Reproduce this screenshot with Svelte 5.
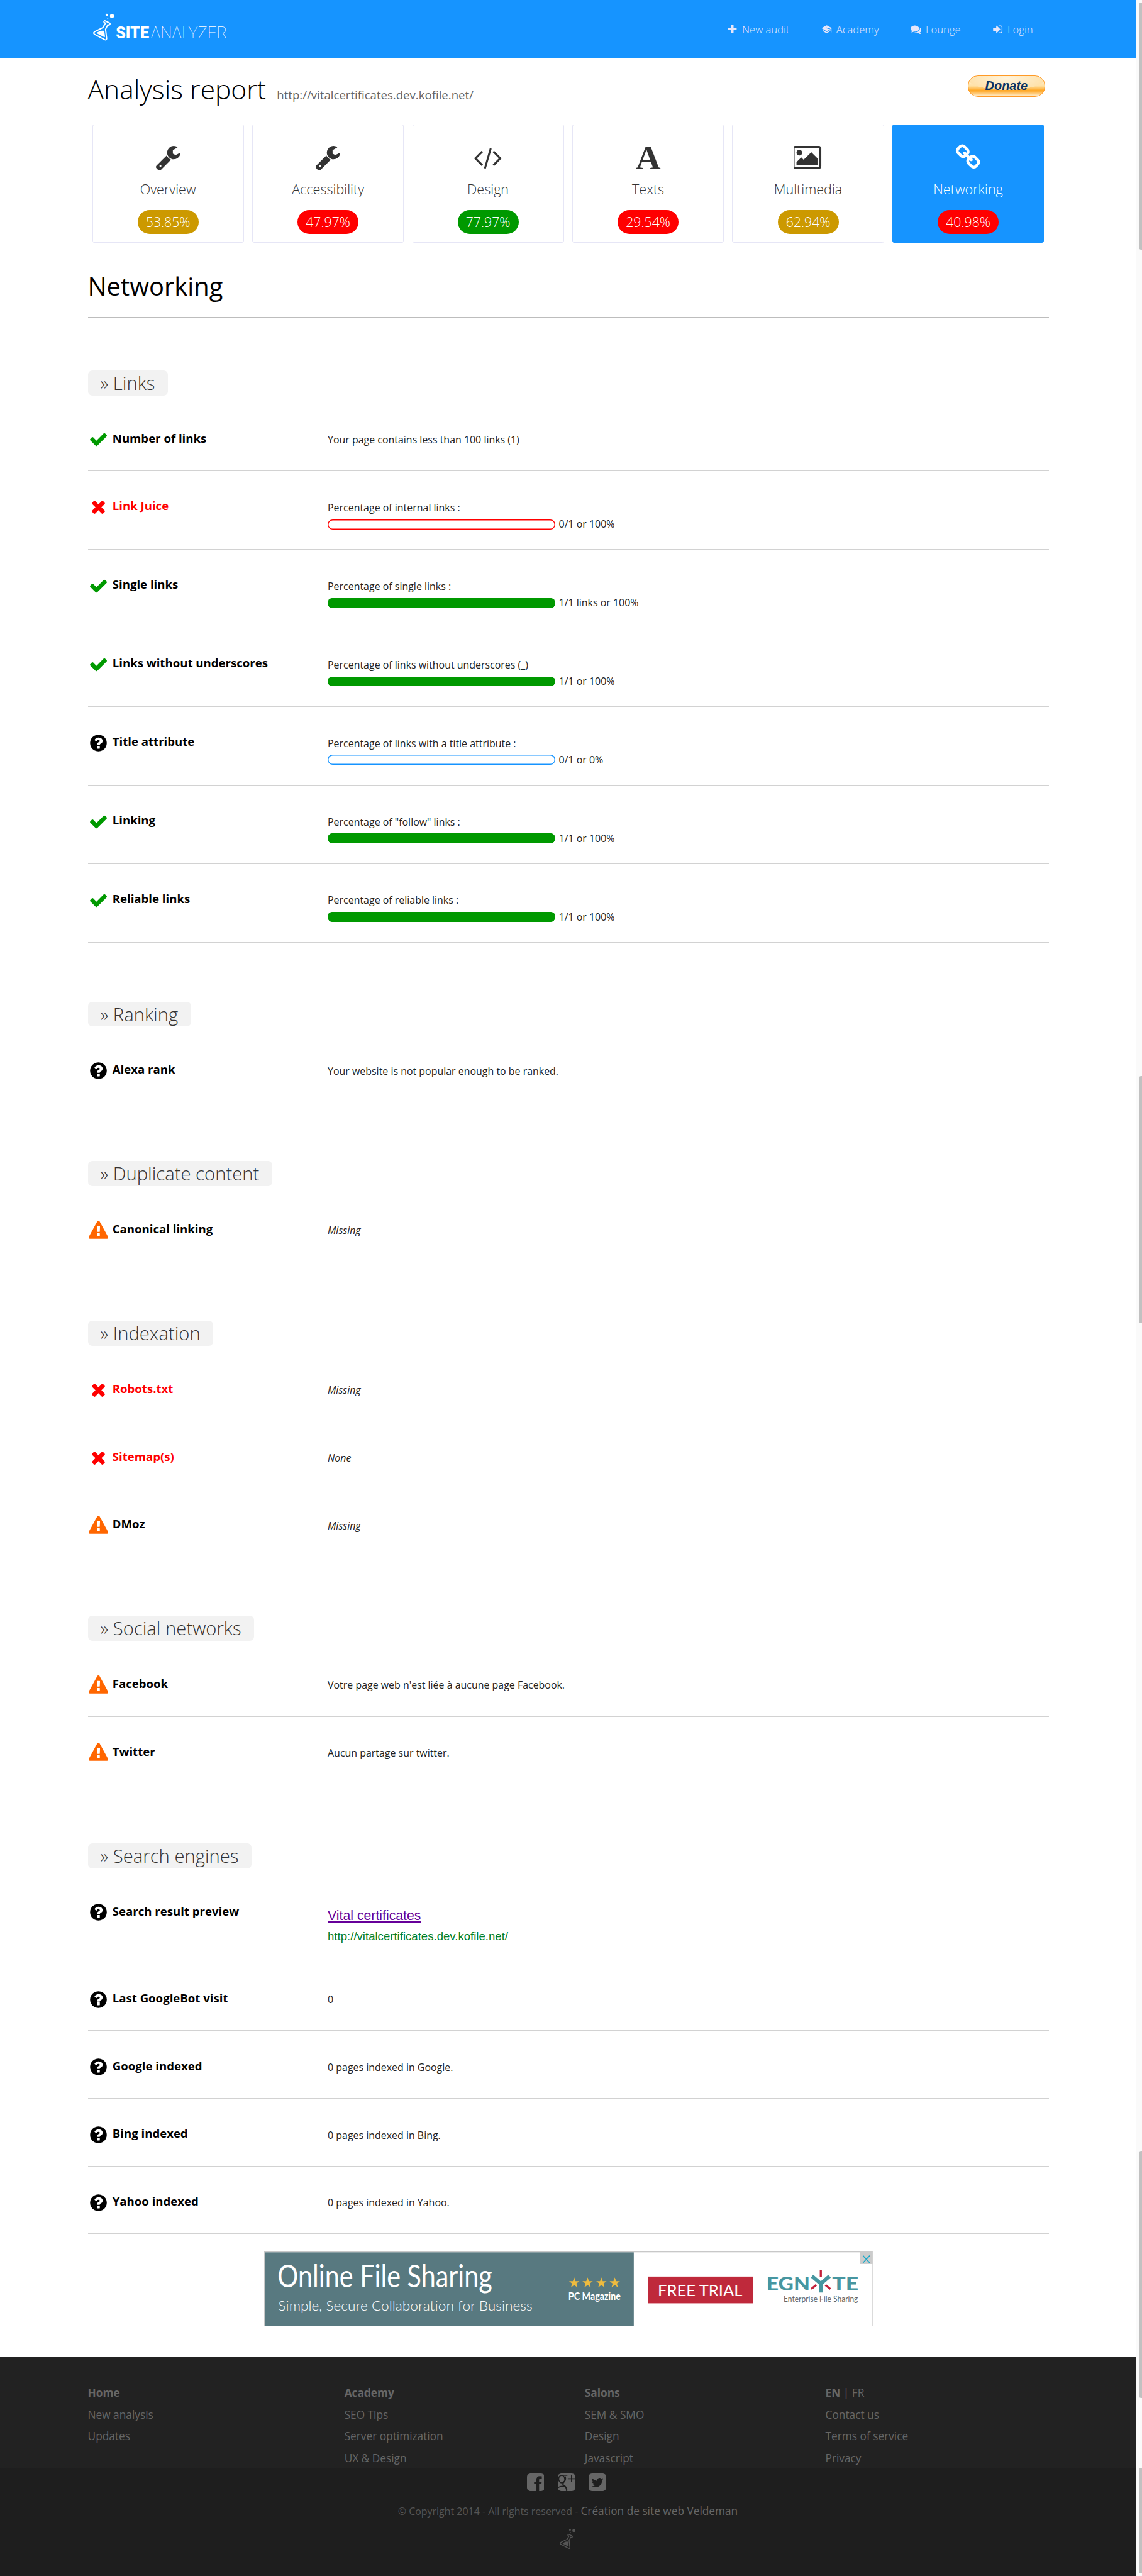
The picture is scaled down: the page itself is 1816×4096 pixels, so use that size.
<script>
  // FontAwesome-style glyphs: [viewBox, path]
  const icons = {
    plus: ['0 0 1792 1792', 'M1600 736v192q0 40-28 68t-68 28h-416v416q0 40-28 68t-68 28h-192q-40 0-68-28t-28-68v-416h-416q-40 0-68-28t-28-68v-192q0-40 28-68t68-28h416v-416q0-40 28-68t68-28h192q40 0 68 28t28 68v416h416q40 0 68 28t28 68z'],
    academy: ['0 0 26 24', 'M0.5 9.2 11.6 2.6Q12.8 1.9 14 2.6L25 8.6 24.4 10V19.5H23V11L14.5 15.8Q13.2 16.4 11.8 15.8zM10.3 8.7 20.3 11.8 21.6 10.3 12.5 7.6zM4 13.7 11.8 18Q13.2 18.6 14.5 18L21.8 13.8V16L14.2 21Q13 21.6 11.8 21L5.5 17.3z'],
    comments: ['0 0 1792 1792', 'M1408 768q0 139-94 257t-256.5 186.5-353.5 68.5q-86 0-176-16-124 88-278 128-36 9-86 16h-3q-11 0-20.5-8t-11.5-21q-1-3-1-6.5t.5-6.5 2-6l2.5-5 3.5-5.5 4-5 4.5-5 4-4.5q5-6 23-25t26-29.5 22.5-29 25-38.5 20.5-44q-124-72-195-177t-71-224q0-139 94-257t256.5-186.5 353.5-68.5 353.5 68.5 256.5 186.5 94 257zm384 256q0 120-71 224.5t-195 176.5q10 24 20.5 44t25 38.5 22.5 29 26 29.5 23 25q1 1 4 4.5t4.5 5 4 5 3.5 5.5l2.5 5t2 6 .5 6.5-1 6.5q-3 14-13 22t-22 7q-50-7-86-16-154-40-278-128-90 16-176 16-271 0-472-132 58 4 88 4 161 0 309-45t264-129q125-92 192-212t67-254q0-77-23-152 129 71 204 178t75 230z'],
    login: ['0 0 1792 1792', 'M1312 896q0 26-19 45l-544 544q-19 19-45 19t-45-19-19-45v-288h-448q-26 0-45-19t-19-45v-384q0-26 19-45t45-19h448v-288q0-26 19-45t45-19 45 19l544 544q19 19 19 45zm352-352v704q0 119-84.5 203.5t-203.5 84.5h-320q-13 0-22.5-9.5t-9.5-22.5q0-4-1-20t-.5-26.5 3-23.5 10-19.5 20.5-6.5h320q66 0 113-47t47-113v-704q0-66-47-113t-113-47h-312l-11.5-1-11.5-3-8-5.5-7-9-2-13.5q0-4-1-20t-.5-26.5 3-23.5 10-19.5 20.5-6.5h320q119 0 203.5 84.5t84.5 203.5z'],
    wrench: ['0 0 1792 1792', 'M448 1472q0-26-19-45t-45-19-45 19-19 45 19 45 45 19 45-19 19-45zm644-420l-682 682q-37 37-90 37-52 0-91-37l-106-108q-38-36-38-90 0-53 38-91l681-681q39 98 114.5 173.5t173.5 114.5zm634-435q0 39-23 106-47 134-164.5 217.5t-258.5 83.5q-185 0-316.5-131.5t-131.5-316.5 131.5-316.5 316.5-131.5q58 0 121.5 16.5t107.5 46.5q16 11 16 28t-16 28l-293 169v224l193 107q5-3 79-48.5t135.5-81 70.5-35.5q15 0 23.5 10t8.5 25z'],
    code: ['0 0 1920 1792', 'M617 1399l-50 50q-10 10-23 10t-23-10l-466-466q-10-10-10-23t10-23l466-466q10-10 23-10t23 10l50 50q10 10 10 23t-10 23l-393 393 393 393q10 10 10 23t-10 23zm591-1067l-373 1291q-4 13-15.5 19.5t-23.5 2.5l-62-17q-13-4-19.5-15.5t-2.5-24.5l373-1291q4-13 15.5-19.5t23.5-2.5l62 17q13 4 19.5 15.5t2.5 24.5zm657 651l-466 466q-10 10-23 10t-23-10l-50-50q-10-10-10-23t10-23l393-393-393-393q-10-10-10-23t10-23l50-50q10-10 23-10t23 10l466 466q10 10 10 23t-10 23z'],
    image: ['0 0 1920 1792', 'M576 576q0 80-56 136t-136 56-136-56-56-136 56-136 136-56 136 56 56 136zm1024 384v448h-1408v-192l320-320 160 160 512-512zm96-704h-1600q-13 0-22.5 9.5t-9.5 22.5v1216q0 13 9.5 22.5t22.5 9.5h1600q13 0 22.5-9.5t9.5-22.5v-1216q0-13-9.5-22.5t-22.5-9.5zm160 32v1216q0 66-47 113t-113 47h-1600q-66 0-113-47t-47-113v-1216q0-66 47-113t113-47h1600q66 0 113 47t47 113z'],
    link: ['0 0 1792 1792', 'M1520 1216q0-40-28-68l-208-208q-28-28-68-28-42 0-72 32 3 3 19 18.5t21.5 21.5 15 19 13 25.5 3.5 27.5q0 40-28 68t-68 28q-15 0-27.5-3.5t-25.5-13-19-15-21.5-21.5-18.5-19q-33 31-33 73 0 40 28 68l206 207q27 27 68 27 40 0 68-26l147-146q28-28 28-67zm-703-705q0-40-28-68l-206-207q-28-28-68-28-39 0-68 27l-147 146q-28 28-28 67 0 40 28 68l208 208q27 27 68 27 42 0 72-31-3-3-19-18.5t-21.5-21.5-15-19-13-25.5-3.5-27.5q0-40 28-68t68-28q15 0 27.5 3.5t25.5 13 19 15 21.5 21.5 18.5 19q33-31 33-73zm895 705q0 120-85 203l-147 146q-83 83-203 83-121 0-204-85l-206-207q-83-83-83-203 0-123 88-209l-88-88q-86 88-208 88-120 0-204-84l-208-208q-84-84-84-204t85-203l147-146q83-83 203-83 121 0 204 85l206 207q83 83 83 203 0 123-88 209l88 88q86-88 208-88 120 0 204 84l208 208q84 84 84 204z'],
    ok: ['0 0 1792 1792', 'M1671 566q0 40-28 68l-724 724-136 136q-28 28-68 28t-68-28l-136-136-362-362q-28-28-28-68t28-68l136-136q28-28 68-28t68 28l294 295 656-657q28-28 68-28t68 28l136 136q28 28 28 68z'],
    bad: ['0 0 1792 1792', 'M1490 1322q0 40-28 68l-136 136q-28 28-68 28t-68-28l-294-294-294 294q-28 28-68 28t-68-28l-136-136q-28-28-28-68t28-68l294-294-294-294q-28-28-28-68t28-68l136-136q28-28 68-28t68 28l294 294 294-294q28-28 68-28t68 28l136 136q28 28 28 68t-28 68l-294 294 294 294q28 28 28 68z'],
    info: ['0 0 1792 1792', 'M1024 1376v-192q0-14-9-23t-23-9h-192q-14 0-23 9t-9 23v192q0 14 9 23t23 9h192q14 0 23-9t9-23zm256-672q0-88-55.5-163t-138.5-116-170-41q-243 0-371 213-15 24 8 42l132 100q7 6 19 6 16 0 25-12 53-68 86-92 34-24 86-24 48 0 85.5 26t37.5 59q0 38-20 61t-68 45q-63 28-115.5 86.5t-52.5 125.5v36q0 14 9 23t23 9h192q14 0 23-9t9-23q0-19 21.5-49.5t54.5-49.5q32-18 49-28.5t46-35 44.5-48 28-60.5 12.5-81zm384 192q0 209-103 385.5t-279.5 279.5-385.5 103-385.5-103-279.5-279.5-103-385.5 103-385.5 279.5-279.5 385.5-103 385.5 103 279.5 279.5 103 385.5z'],
    warn: ['0 0 1792 1792', 'M1024 1375v-190q0-14-9.5-23.5t-22.5-9.5h-192q-13 0-22.5 9.5t-9.5 23.5v190q0 14 9.5 23.5t22.5 9.5h192q13 0 22.5-9.5t9.5-23.5zm-2-374l18-459q0-12-10-19-13-11-24-11h-220q-11 0-24 11-10 7-10 21l17 457q0 10 10 16.5t24 6.5h185q14 0 23.5-6.5t10.5-16.5zm-14-934l768 1408q35 63-2 126-17 29-46.5 46t-63.5 17h-1536q-34 0-63.5-17t-46.5-46q-37-63-2-126l768-1408q17-31 47-49t65-18 65 18 47 49z'],
    facebook: ['128 128 1536 1536', 'M1376 128q119 0 203.5 84.5t84.5 203.5v960q0 119-84.5 203.5t-203.5 84.5h-188v-595h199l30-232h-229v-148q0-56 23.5-84t91.5-28l122-1v-207q-63-9-178-9-136 0-217.5 80t-81.5 226v171h-200v232h200v595h-532q-119 0-203.5-84.5t-84.5-203.5v-960q0-119 84.5-203.5t203.5-84.5h960z'],
    twitter: ['128 128 1536 1536', 'M1408 610q-56 25-121 34 68-40 93-117-65 38-134 51-61-66-153-66-87 0-148.5 61.5t-61.5 148.5q0 29 5 48-129-7-242-65t-192-155q-29 50-29 106 0 114 91 175-47-1-100-26v2q0 75 50 133.5t123 72.5q-29 8-51 8-13 0-39-4 21 63 74.5 104t121.5 42q-116 90-261 90-26 0-50-3 148 94 322 94 112 0 210-35.5t168-95 120.5-137 75-162 24.5-168.5q0-18-1-27 63-45 105-109zm256-194v960q0 119-84.5 203.5t-203.5 84.5h-960q-119 0-203.5-84.5t-84.5-203.5v-960q0-119 84.5-203.5t203.5-84.5h960q119 0 203.5 84.5t84.5 203.5z']
  };

  const nav = [
    ['plus', 'New audit'],
    ['academy', 'Academy'],
    ['comments', 'Lounge'],
    ['login', 'Login']
  ];

  const tiles = [
    { icon: 'wrench', label: 'Overview', score: '53.85%', tone: 'amber' },
    { icon: 'wrench', label: 'Accessibility', score: '47.97%', tone: 'red' },
    { icon: 'code', label: 'Design', score: '77.97%', tone: 'green' },
    { icon: 'letter', label: 'Texts', score: '29.54%', tone: 'red' },
    { icon: 'image', label: 'Multimedia', score: '62.94%', tone: 'amber' },
    { icon: 'link', label: 'Networking', score: '40.98%', tone: 'red', active: true }
  ];

  const sections = [
    {
      title: 'Links',
      rows: [
        { s: 'ok', name: 'Number of links', text: 'Your page contains less than 100 links (1)' },
        { s: 'bad', name: 'Link Juice', text: 'Percentage of internal links :', bar: '0/1 or 100%', fill: 0 },
        { s: 'ok', name: 'Single links', text: 'Percentage of single links :', bar: '1/1 links or 100%', fill: 100 },
        { s: 'ok', name: 'Links without underscores', text: 'Percentage of links without underscores (_)', bar: '1/1 or 100%', fill: 100 },
        { s: 'info', name: 'Title attribute', text: 'Percentage of links with a title attribute :', bar: '0/1 or 0%', fill: 0 },
        { s: 'ok', name: 'Linking', text: 'Percentage of "follow" links :', bar: '1/1 or 100%', fill: 100 },
        { s: 'ok', name: 'Reliable links', text: 'Percentage of reliable links :', bar: '1/1 or 100%', fill: 100 }
      ]
    },
    { title: 'Ranking', rows: [{ s: 'info', name: 'Alexa rank', text: 'Your website is not popular enough to be ranked.' }] },
    { title: 'Duplicate content', rows: [{ s: 'warn', name: 'Canonical linking', text: 'Missing', em: true }] },
    {
      title: 'Indexation',
      rows: [
        { s: 'bad', name: 'Robots.txt', text: 'Missing', em: true },
        { s: 'bad', name: 'Sitemap(s)', text: 'None', em: true },
        { s: 'warn', name: 'DMoz', text: 'Missing', em: true }
      ]
    },
    {
      title: 'Social networks',
      rows: [
        { s: 'warn', name: 'Facebook', text: "Votre page web n'est liée à aucune page Facebook." },
        { s: 'warn', name: 'Twitter', text: 'Aucun partage sur twitter.' }
      ]
    },
    {
      title: 'Search engines',
      rows: [
        { s: 'info', name: 'Search result preview', preview: ['Vital certificates', 'http://vitalcertificates.dev.kofile.net/'] },
        { s: 'info', name: 'Last GoogleBot visit', text: '0' },
        { s: 'info', name: 'Google indexed', text: '0 pages indexed in Google.' },
        { s: 'info', name: 'Bing indexed', text: '0 pages indexed in Bing.' },
        { s: 'info', name: 'Yahoo indexed', text: '0 pages indexed in Yahoo.' }
      ]
    }
  ];

  const footer = [
    ['Home', 'New analysis', 'Updates'],
    ['Academy', 'SEO Tips', 'Server optimization', 'UX & Design'],
    ['Salons', 'SEM & SMO', 'Design', 'Javascript'],
    ['EN', 'Contact us', 'Terms of service', 'Privacy']
  ];

  const stars = [742, 774, 807, 839];
</script>

{#snippet icon(name)}
  <svg class="icon" viewBox={icons[name][0]}><path fill="currentColor" fill-rule="evenodd" d={icons[name][1]} /></svg>
{/snippet}

{#snippet flask()}
  <g fill="none" stroke="currentColor" stroke-width="9" stroke-linejoin="round" stroke-linecap="round">
    <path d="M102 104Q98 98 102 94Q106 88 113 93L137 105Q146 109 144 115Q141 123 133 120" />
    <path d="M105 104L111 108L93 139L32 170Q22 179 32 187L106 226Q119 232 120 217L112 152L128 119L133 121" />
  </g>
  <path fill="currentColor" d="M49 178Q50 174 72 165Q78 161 101 162Q103 162 103 165L108 203Q108 210 100 206L52 182Q48 180 49 178z" />
  <circle fill="currentColor" cx="121" cy="49" r="9" />
  <circle fill="currentColor" cx="158" cy="56" r="14.5" />
  <circle fill="currentColor" cx="128" cy="74" r="3.6" />
{/snippet}

<div class="frame">
  <div class="page">
    <header>
      <svg class="logo" viewBox="0 0 1020 300">
        {@render flask()}
        <text class="site" x="186" y="218" textLength="238" lengthAdjust="spacingAndGlyphs">SITE</text>
        <text class="analyzer" x="437" y="218" textLength="549" lengthAdjust="spacingAndGlyphs">ANALYZER</text>
      </svg>
      <nav>
        {#each nav as [name, label]}
          <a>{@render icon(name)}<span>{label}</span></a>
        {/each}
      </nav>
    </header>

    <main>
      <div class="heading">
        <h1>Analysis report</h1>
        <span class="url">http://vitalcertificates.dev.kofile.net/</span>
        <button class="donate">Donate</button>
      </div>

      <div class="tiles">
        {#each tiles as t}
          <div class="tile" class:active={t.active}>
            <div class="glyph">
              {#if t.icon === 'letter'}<span class="letter">A</span>{:else}{@render icon(t.icon)}{/if}
            </div>
            <div class="tile-label">{t.label}</div>
            <div class="pill {t.tone}">{t.score}</div>
          </div>
        {/each}
      </div>

      <h2>Networking</h2>

      {#each sections as section}
        <section>
          <h3>» {section.title}</h3>
          {#each section.rows as r}
            <div class="row {r.s}" class:with-bar={r.bar} class:with-preview={r.preview}>
              <div class="mark">{@render icon(r.s)}</div>
              <div class="name">{r.name}</div>
              <div class="detail">
                {#if r.preview}
                  <a class="result">{r.preview[0]}</a>
                  <div class="result-url">{r.preview[1]}</div>
                {:else}
                  <div class="text" class:em={r.em}>{r.text}</div>
                  {#if r.bar}
                    <div class="meter">
                      <div class="track"><div class="fill" style="width: {r.fill}%"></div></div>
                      <span>{r.bar}</span>
                    </div>
                  {/if}
                {/if}
              </div>
            </div>
          {/each}
        </section>
      {/each}

      <svg class="banner" viewBox="0 0 1456 180">
        <rect x="1" y="1" width="1454" height="178" fill="#fff" stroke="#c8c8c8" stroke-width="2" />
        <rect x="1.5" y="2" width="883" height="176" fill="#587980" />
        <g fill="#fff">
          <text class="lato" x="32" y="86" font-size="76" textLength="514" lengthAdjust="spacingAndGlyphs">Online File Sharing</text>
          <text class="lato" x="34" y="141" font-size="33.5" font-weight="300" textLength="608" lengthAdjust="spacingAndGlyphs">Simple, Secure Collaboration for Business</text>
          <text class="lato" x="728" y="116" font-size="27" font-weight="700" textLength="125" lengthAdjust="spacingAndGlyphs">PC Magazine</text>
        </g>
        {#each stars as x}
          <path transform="translate({x} 75)" fill="#eebb3f" d="M0-13 3.2-4H12.4L5 1.6 7.8 11 0 5.3-7.8 11-5 1.6-12.4-4H-3.2z" />
        {/each}
        <rect x="918" y="60" width="252" height="64" fill="#bf293b" />
        <text class="lato" x="942" y="107" font-size="38" fill="#fff" textLength="202" lengthAdjust="spacingAndGlyphs">FREE TRIAL</text>
        <g fill="#4796a0">
          <text class="lato" x="1202" y="94" font-size="46" font-weight="900" textLength="104" lengthAdjust="spacingAndGlyphs">EGN</text>
          <text class="lato" x="1359" y="94" font-size="46" font-weight="900" textLength="63" lengthAdjust="spacingAndGlyphs">TE</text>
        </g>
        <path d="M1311 59L1332 77L1353 59M1332 75V98" fill="none" stroke="#4796a0" stroke-width="9" />
        <path d="M1332 45V61M1309 90L1321 80M1355 90L1343 80" fill="none" stroke="#c4213a" stroke-width="5" />
        <text class="lato" x="1243" y="121" font-size="21" fill="#666" textLength="178" lengthAdjust="spacingAndGlyphs">Enterprise File Sharing</text>
        <rect x="1426" y="0" width="30" height="30" fill="#ccc" />
        <path d="M1433 10L1449 27M1449 10L1433 27" stroke="#18a8c8" stroke-width="2.4" />
      </svg>
    </main>

    <footer>
      <div class="links">
        {#each footer as col, i}
          <ul>
            {#each col as item, j}
              <li class:strong={j === 0}>{item}{#if i === 3 && j === 0}<span class="lang">{' | FR'}</span>{/if}</li>
            {/each}
          </ul>
        {/each}
      </div>
      <div class="legal">
        <div class="social">
          {@render icon('facebook')}
          <svg class="icon" viewBox="0 0 42 42">
            <rect width="42" height="42" rx="8" fill="currentColor" />
            <g fill="none" stroke="#1e1e1e">
              <ellipse cx="9.500" cy="13.500" rx="7.500" ry="9" stroke-width="2.600" transform="rotate(-8 9.5 13.5)" />
              <path d="M10 4.500H23" stroke-width="2" />
              <path d="M17 7Q20.500 14 15 20Q10 25 14 28.500Q22.500 33 21 42" stroke-width="3.200" />
              <path d="M0 34.500Q6 29.500 15 31" stroke-width="2.400" />
              <path d="M33 4V21M24 12.500H42" stroke-width="2.800" />
            </g>
          </svg>
          {@render icon('twitter')}
        </div>
        <p>© Copyright 2014 - All rights reserved - <a>Création de site web Veldeman</a></p>
        <svg class="mini" viewBox="22 38 152 198">{@render flask()}</svg>
      </div>
    </footer>
  </div>

  <div class="scroll">
    <i class="t1"></i><i class="t2"></i><i class="t3"></i><i class="t4"></i>
  </div>
</div>

<style>
  :global(html) { font-size: 66.46px; }
  :global(body) { margin: 0; background: #fff; }
  .frame {
    display: grid;
    grid-template-columns: 1fr 0.15rem;
    width: 1816px;
    height: 4096px;
    overflow: hidden;
    font-family: 'Open Sans', 'Noto Sans', sans-serif;
    font-size: 0.24rem;
    color: #222;
  }
  .page { display: flex; flex-direction: column; min-width: 0; }
  .icon { display: block; height: 100%; }

  header {
    flex: none;
    display: flex;
    justify-content: space-between;
    box-sizing: border-box;
    height: 1.4rem;
    padding: 0 2.46rem 0 2.15rem;
    background: #1694ff;
    color: #fff;
  }
  .logo { width: 3.4rem; height: 1rem; margin-top: 0.2rem; fill: #fff; }
  .site { font: 900 117px Roboto, sans-serif; }
  .analyzer { font: 100 117px Roboto, sans-serif; }
  nav { display: flex; gap: 0.76rem; height: 1.39rem; align-items: center; color: #e6e6fa; }
  nav a { display: flex; align-items: center; gap: 0.1rem; font-weight: 300; font-size: 0.25rem; }
  nav .icon { width: 0.26rem; height: 0.26rem; }

  main { flex: none; width: 23rem; padding-left: 2.1rem; }
  .heading { display: flex; align-items: baseline; height: 1.42rem; line-height: 1.46rem; }
  h1 { margin: 0; font-weight: 300; font-size: 0.64rem; color: #000; }
  .url { margin-left: 0.26rem; font-size: 0.28rem; color: #666; }
  .donate {
    align-self: flex-start;
    width: 1.84rem;
    height: 0.52rem;
    margin: 0.4rem 0.1rem 0 auto;
    padding: 0;
    border: 1.5px solid #ff9a26;
    border-radius: 0.24rem;
    background:
      radial-gradient(ellipse 52% 60% at 50% 10%, #fff3da 0, #fee2ac 98%, transparent 100%),
      linear-gradient(#fff 0, #ffdf9e 50%, #ffa51f 72%, #ffc46a 84%, #fff2d8 100%);
    font: italic 700 0.3rem/0.48rem 'Liberation Sans', sans-serif;
    color: #0b3263;
  }

  .tiles { display: grid; grid-template-columns: repeat(6, 1fr); gap: 0.2rem; margin: 0.165rem 0.12rem 0 0.105rem; }
  .tile {
    display: flex;
    flex-direction: column;
    align-items: center;
    box-sizing: border-box;
    height: 2.83rem;
    padding-top: 0.44rem;
    border: 1.5px solid #e6e6f6;
    border-radius: 0.04rem;
    color: #333;
  }
  .active { background: #1694ff; border-color: #1694ff; color: #fff; }
  .glyph { height: 0.64rem; }
  .letter { display: block; font: 700 0.83rem/0.66rem 'Liberation Serif', serif; }
  .tile-label { margin-top: 0.26rem; font-weight: 300; font-size: 0.325rem; line-height: 0.4rem; }
  .pill {
    width: 1.46rem;
    margin-top: 0.28rem;
    border-radius: 0.29rem;
    text-align: center;
    font-weight: 300;
    font-size: 0.32rem;
    line-height: 0.58rem;
    color: #fff;
  }
  .amber { background: #c90; }
  .red { background: #f00; }
  .green { background: #090; }

  h2 {
    margin: 0.595rem 0 0;
    border-bottom: 1.5px solid #bdbdbd;
    font-weight: 400;
    font-size: 0.6rem;
    line-height: 0.86rem;
    padding-bottom: 0.31rem;
    color: #000;
  }
  section { margin-top: 1.41rem; }
  h2 + section { margin-top: 1.27rem; }
  h3 {
    width: fit-content;
    height: 0.6rem;
    margin: 0 0 0.19rem;
    padding: 0 0.31rem 0 0.3rem;
    border-radius: 0.1rem;
    background: #f2f2f2;
    font-weight: 300;
    font-size: 0.44rem;
    line-height: 0.63rem;
    color: #333;
  }
  .row {
    display: grid;
    grid-template-columns: 0.59rem 5.15rem 1fr;
    box-sizing: border-box;
    height: 1.62rem;
    border-bottom: 1px solid #d2d2d2;
  }
  .with-bar { height: 1.88rem; }
  .with-preview { height: 2.08rem; }
  .mark { height: 0.467rem; padding: 0.63rem 0 0 0.02rem; }
  .name { padding-top: 0.635rem; font-weight: 700; font-size: 0.28rem; line-height: 0.4rem; color: #000; }
  .ok .mark { color: #090; }
  .bad .mark, .bad .name { color: #f00; }
  .bad .mark { padding-top: 0.62rem; }
  .info .mark { color: #000; }
  .warn .mark { color: #f60; }
  .detail { padding-top: 0.67rem; line-height: 0.4rem; }
  .em { font-style: italic; }
  .meter { display: flex; align-items: center; gap: 0.09rem; height: 0.24rem; margin-top: 0.08rem; }
  .track { position: relative; width: 5.44rem; height: 0.24rem; border-radius: 0.12rem; box-shadow: inset 0 0 0 0.021rem #090; overflow: hidden; }
  .bad .track { box-shadow: inset 0 0 0 0.021rem #f00; }
  .info .track { box-shadow: inset 0 0 0 0.021rem #1694ff; }
  .fill { height: 100%; background: #090; }
  .with-preview .detail { padding-top: 0.75rem; font-family: 'Liberation Sans', Arial, sans-serif; }
  .result { display: block; font-size: 0.32rem; color: #609; text-decoration: underline; }
  .result-url { margin-top: 0.09rem; font-size: 0.28rem; color: #00802a; }

  .banner { display: block; width: 14.56rem; height: 1.8rem; margin: 0.41rem auto 0.72rem; }
  .lato { font-family: Lato, sans-serif; }

  footer { flex: 1; display: flex; flex-direction: column; color: #666; }
  .links {
    display: grid;
    grid-template-columns: 6.14rem 5.75rem 5.76rem 1fr;
    box-sizing: border-box;
    height: 2.66rem;
    padding: 0.62rem 2.1rem 0;
    background: #222;
    font-size: 0.26rem;
    line-height: 0.52rem;
  }
  ul { margin: 0; padding: 0; list-style: none; }
  .strong { font-weight: 700; }
  .lang { font-weight: 400; white-space: pre; }
  .legal { flex: 1; display: flex; flex-direction: column; align-items: center; background: #1e1e1e; }
  .social { display: flex; gap: 0.32rem; height: 0.42rem; margin: 0.14rem 0.07rem 0 0; }
  .legal p { margin: 0.29rem 0 0; font-size: 0.24rem; line-height: 0.4rem; color: #555; }
  .legal a { font-size: 0.26rem; color: #666; }
  .mini { width: 0.38rem; height: 0.49rem; margin-top: 0.21rem; color: #555; }

  .scroll { display: flex; flex-direction: column; align-items: flex-end; background: #fafafa; border-left: 1px solid #e6e6e6; }
  .scroll i { flex: none; width: 0.07rem; background: #c1c1c1; border-radius: 0.06rem 0 0 0.06rem; }
  .t1 { height: 5.91rem; margin-top: 0.06rem; }
  .t2 { height: 5.91rem; margin-top: 19.78rem; }
  .t3 { height: 5.91rem; margin-top: 19.81rem; }
  .scroll .t4 { height: 2.53rem; margin-top: 1.66rem; border-top-left-radius: 0; }
</style>
